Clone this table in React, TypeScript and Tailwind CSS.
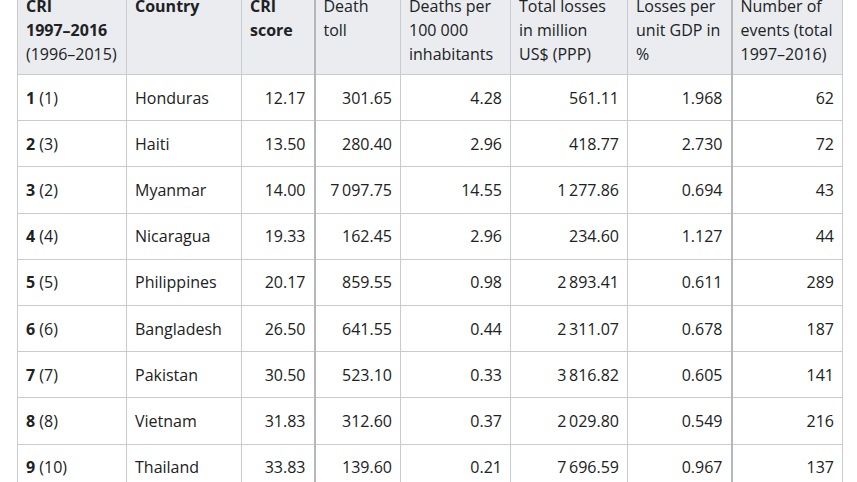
const rows = [
  ["1", "1", "Honduras", "12.17", "301.65", "4.28", "561.11", "1.968", "62"],
  ["2", "3", "Haiti", "13.50", "280.40", "2.96", "418.77", "2.730", "72"],
  ["3", "2", "Myanmar", "14.00", "7\u2009097.75", "14.55", "1\u2009277.86", "0.694", "43"],
  ["4", "4", "Nicaragua", "19.33", "162.45", "2.96", "234.60", "1.127", "44"],
  ["5", "5", "Philippines", "20.17", "859.55", "0.98", "2\u2009893.41", "0.611", "289"],
  ["6", "6", "Bangladesh", "26.50", "641.55", "0.44", "2\u2009311.07", "0.678", "187"],
  ["7", "7", "Pakistan", "30.50", "523.10", "0.33", "3\u2009816.82", "0.605", "141"],
  ["8", "8", "Vietnam", "31.83", "312.60", "0.37", "2\u2009029.80", "0.549", "216"],
  ["9", "10", "Thailand", "33.83", "139.60", "0.21", "7\u2009696.59", "0.967", "137"],
];

const widths = [109, 115, 73, 86, 110, 117, 104, 111];

const th = "border border-[#c8ccd1] px-2 pt-2 pb-2 text-left align-top font-normal";
const td = "border border-[#c8ccd1] px-2 py-[10.6px]";

export default function App() {
  return (
    <div
      className="h-[482px] w-[857px] overflow-hidden bg-white text-[16px] leading-[24px] text-[#202122]"
      style={{ fontFamily: '"Open Sans", sans-serif' }}
    >
      <table className="ml-[17px] mt-[-15px] table-fixed border-collapse">
        <colgroup>
          {widths.map((w, i) => (
            <col key={i} style={{ width: w }} />
          ))}
        </colgroup>
        <thead className="bg-[#eaecf0]">
          <tr>
            <th className={th}>
              <b>CRI</b>
              <br />
              <b>1997–2016</b>
              <br />
              (1996–2015)
            </th>
            <th className={th}>
              <b>Country</b>
            </th>
            <th className={`${th} border-r-2 border-r-[#b4b8bd]`}>
              <b>CRI</b>
              <br />
              <b>score</b>
            </th>
            <th className={th}>
              Death
              <br />
              toll
            </th>
            <th className={th}>
              Deaths per
              <br />
              100 000
              <br />
              inhabitants
            </th>
            <th className={th}>
              Total losses
              <br />
              in million
              <br />
              US$ (PPP)
            </th>
            <th className={`${th} border-r-2 border-r-[#b4b8bd]`}>
              Losses per
              <br />
              unit GDP in
              <br />%
            </th>
            <th className={th}>
              Number of
              <br />
              events (total
              <br />
              1997–2016)
            </th>
          </tr>
        </thead>
        <tbody>
          {rows.map((r) => (
            <tr key={r[0]}>
              <td className={td}>
                <b>{r[0]}</b> ({r[1]})
              </td>
              <td className={td}>{r[2]}</td>
              <td className={`${td} border-r-2 border-r-[#b4b8bd] text-right`}>{r[3]}</td>
              <td className={`${td} text-right`}>{r[4]}</td>
              <td className={`${td} text-right`}>{r[5]}</td>
              <td className={`${td} text-right`}>{r[6]}</td>
              <td className={`${td} border-r-2 border-r-[#b4b8bd] text-right`}>{r[7]}</td>
              <td className={`${td} text-right`}>{r[8]}</td>
            </tr>
          ))}
        </tbody>
      </table>
    </div>
  );
}
